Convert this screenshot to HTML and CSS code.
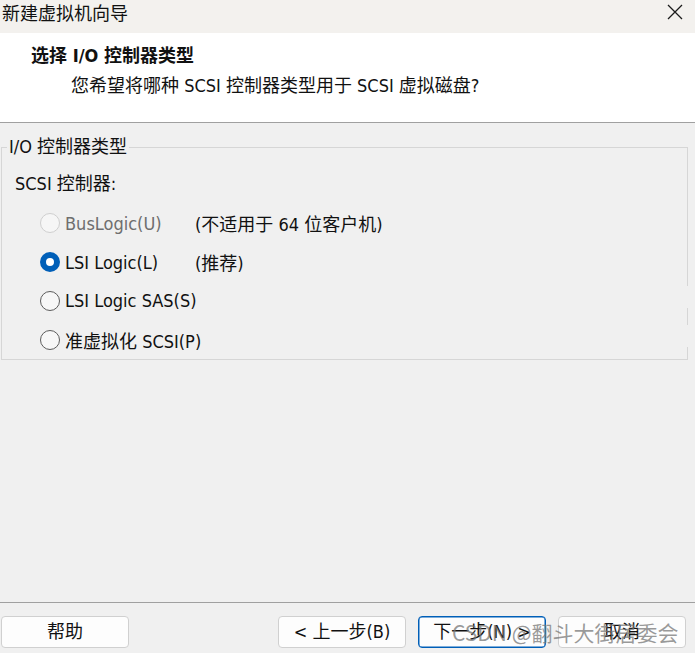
FILE: index.html
```html
<!DOCTYPE html>
<html lang="zh-CN">
<head>
<meta charset="utf-8">
<title>新建虚拟机向导</title>
<link rel="stylesheet" href="styles.css">
</head>
<body>
<div class="window">
  <div class="titlebar">
    <span class="title">新建虚拟机向导</span>
    <svg class="close" width="16" height="16" viewBox="0 0 16 16"><path d="M1 1 L15 15 M15 1 L1 15" stroke="#1b1b1b" stroke-width="1.3" fill="none"/></svg>
  </div>
  <div class="header">
    <div class="h-title">选择 I/O 控制器类型</div>
    <div class="h-sub">您希望将哪种 SCSI 控制器类型用于 SCSI 虚拟磁盘?</div>
  </div>
  <div class="body">
    <fieldset class="group">
      <legend class="legend">I/O 控制器类型</legend>
      <div class="label">SCSI 控制器:</div>
      <div class="options">
        <div class="row">
          <span class="radio disabled"></span>
          <span class="opt disabled-text">BusLogic(U)</span>
          <span class="note">(不适用于 64 位客户机)</span>
        </div>
        <div class="row">
          <span class="radio checked"></span>
          <span class="opt">LSI Logic(L)</span>
          <span class="note">(推荐)</span>
        </div>
        <div class="row">
          <span class="radio"></span>
          <span class="opt">LSI Logic SAS(S)</span>
          <span class="note"></span>
        </div>
        <div class="row">
          <span class="radio"></span>
          <span class="opt">准虚拟化 SCSI(P)</span>
          <span class="note"></span>
        </div>
        <span class="gap gap1"></span>
        <span class="gap gap2"></span>
      </div>
    </fieldset>
  </div>
  <div class="footer">
    <button class="btn help">帮助</button>
    <div class="nav">
      <button class="btn">&lt; 上一步(B)</button>
      <button class="btn primary">下一步(N) &gt;</button>
      <button class="btn">取消</button>
    </div>
    <span class="watermark">CSDN @翻斗大街居委会</span>
  </div>
</div>
</body>
</html>
```
FILE: styles.css
```css
* { box-sizing: border-box; }
html, body {
  margin: 0;
  padding: 0;
  width: 695px;
  height: 653px;
  overflow: hidden;
  background: #f0f0f0;
  font-family: "DejaVu Sans Condensed", "DejaVu Sans", "Noto Sans CJK SC", sans-serif;
  font-size: 18px;
  color: #111;
}
.window {
  width: 695px;
  height: 653px;
  display: flex;
  flex-direction: column;
}
.titlebar {
  height: 33px;
  background: #f3f1ee;
  display: flex;
  align-items: flex-start;
  justify-content: space-between;
  padding-left: 2px;
  padding-right: 12px;
}
.title {
  font-family: "Noto Sans CJK SC", sans-serif;
  font-size: 18px;
  line-height: 24px;
  color: #111;
}
.close {
  margin-top: 4px;
}
.header {
  height: 90px;
  background: #fff;
  border-bottom: 1px solid #a0a0a0;
  padding-top: 12px;
}
.h-title {
  padding-left: 31px;
  font-weight: bold;
  line-height: 22px;
}
.h-sub {
  margin-top: 8px;
  padding-left: 71px;
  line-height: 22px;
}
.body {
  flex: 1;
  padding: 14px 7px 0 1px;
}
.group {
  margin: 0;
  padding: 0;
  border: 1px solid #d6d6d6;
  min-width: 0;
}
.legend {
  margin-left: 5px;
  padding: 0 2px;
  line-height: 20px;
}
.label {
  margin-top: 17px;
  padding-left: 13px;
  line-height: 20px;
}
.options {
  position: relative;
  margin-top: 10px;
  display: flex;
  flex-direction: column;
}
.row {
  height: 38.8px;
  display: flex;
  align-items: center;
  padding-left: 38px;
  white-space: nowrap;
}
.radio {
  width: 20px;
  height: 20px;
  border-radius: 50%;
  border: 1px solid #5c5c5c;
  background: #f7f7f7;
  flex: none;
}
.radio.disabled {
  border-color: #cfcfcf;
  background: #f6f6f6;
}
.radio.checked {
  border: 6px solid #005fb8;
  background: #fff;
}
.opt {
  margin-left: 5px;
  width: 130px;
  flex: none;
}
.disabled-text {
  color: #6e6e6e;
}
.gap {
  position: absolute;
  right: -1px;
  width: 1px;
  background: #f0f0f0;
}
.gap1 { top: 82px; height: 22px; }
.gap2 { top: 121px; height: 22px; }
.footer {
  position: relative;
  height: 51px;
  border-top: 1px solid #a0a0a0;
  display: flex;
  justify-content: space-between;
  padding: 13px 9px 0 1px;
}
.nav {
  display: flex;
  gap: 12px;
}
.btn {
  width: 128px;
  height: 32px;
  background: #fdfdfd;
  border: 1px solid #d0d0d0;
  border-radius: 4px;
  font-family: "DejaVu Sans Condensed", "DejaVu Sans", "Noto Sans CJK SC", sans-serif;
  font-size: 18px;
  color: #111;
  padding: 0;
  line-height: 30px;
  white-space: nowrap;
}
.btn.primary {
  border: 1px solid #005fb8;
  box-shadow: inset 0 0 0 0.5px #005fb8;
}
.watermark {
  position: absolute;
  left: 452px;
  top: 15px;
  font-family: "Noto Sans CJK SC", sans-serif;
  font-size: 21px;
  line-height: 28px;
  color: rgba(120, 120, 120, 0.75);
  white-space: nowrap;
  pointer-events: none;
}
```
